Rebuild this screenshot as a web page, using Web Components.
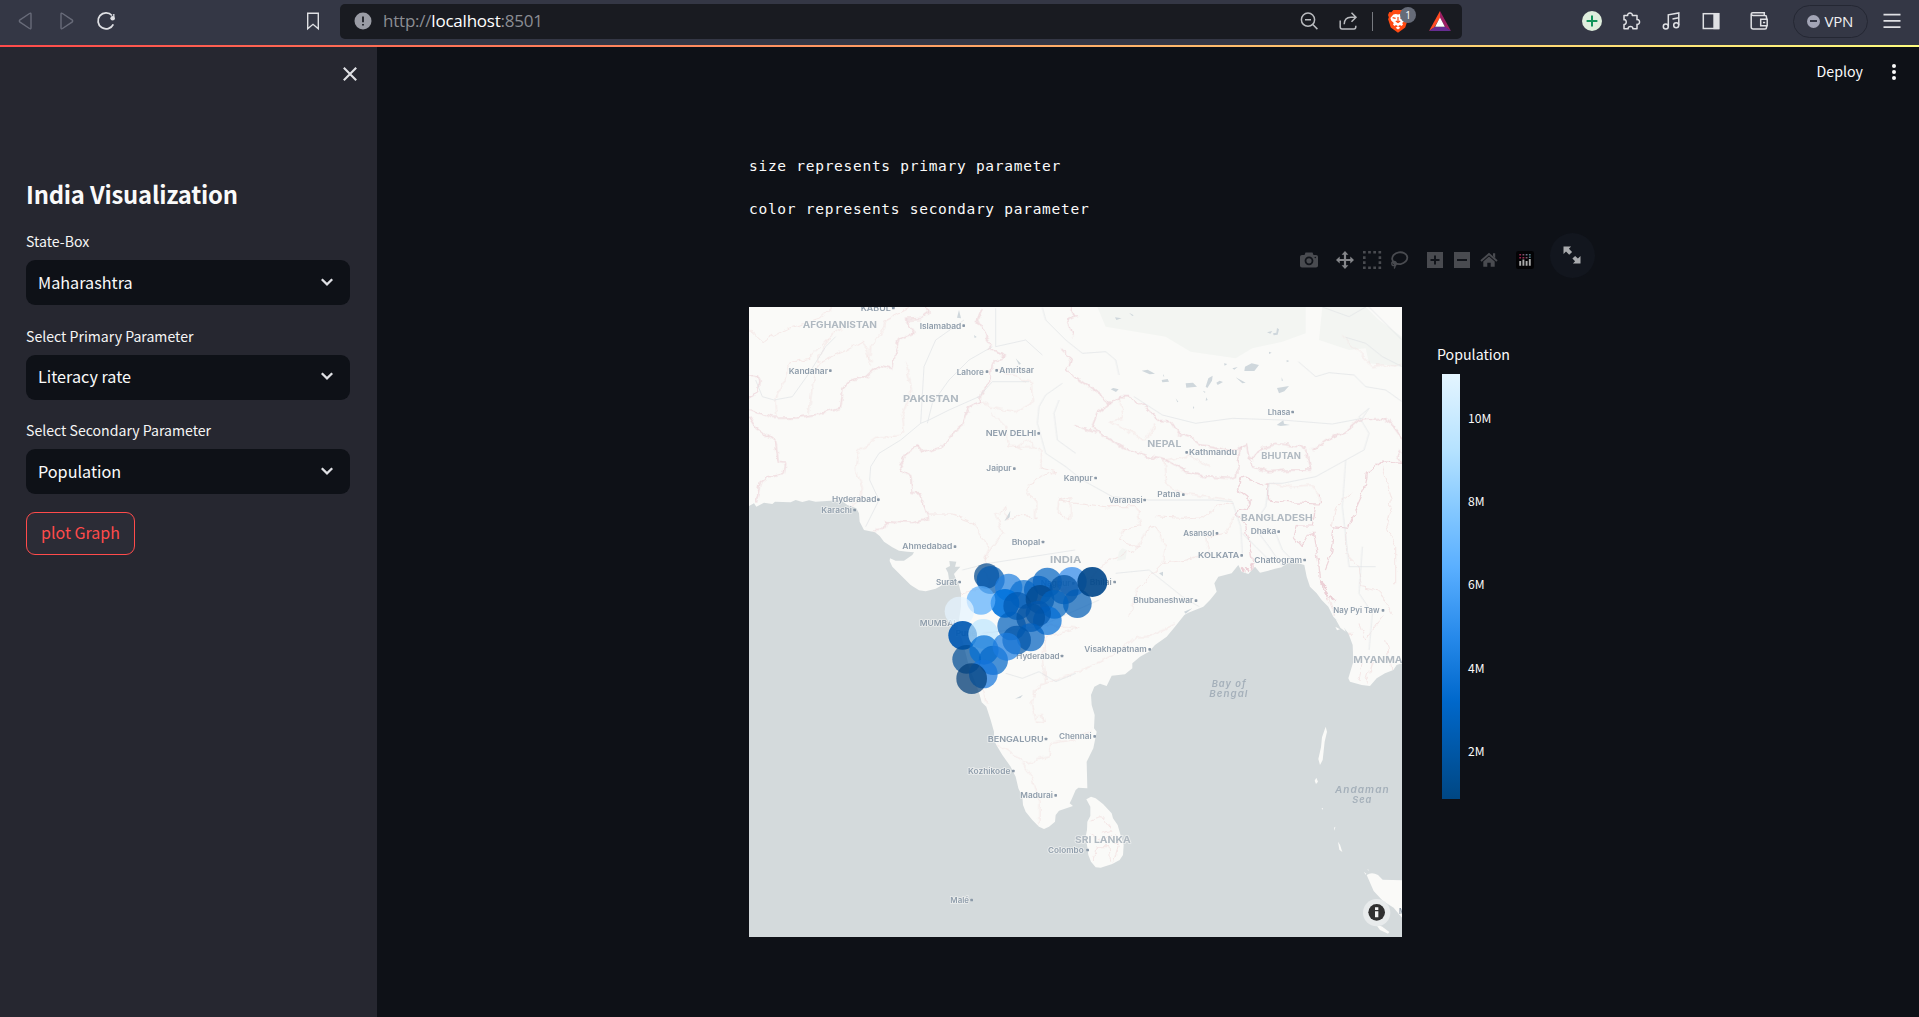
<!DOCTYPE html>
<html lang="en"><head><meta charset="utf-8"><title>India Visualization</title>
<style>
html,body{margin:0;height:100%;overflow:hidden;background:#0e1117}
body{font-family:"Noto Sans CJK SC","Noto Sans",sans-serif;color:#fafafa}
</style></head><body>
<app-shell></app-shell>
<script>
const define=(name,css,html)=>customElements.define(name,class extends HTMLElement{
  constructor(){super();this.attachShadow({mode:'open'}).innerHTML=`<style>*{box-sizing:border-box}${css}</style>`+(typeof html==='function'?html(this):html);}
});

const ICONS={
 back:[24,'<path d="M17 5.2v13.6q0 1.6-1.5.7L6 13.2q-1.3-1.2 0-2.4l9.5-6.3q1.5-.9 1.5.7z" stroke="#686b79" stroke-width="1.4"/>'],
 forward:[24,'<path d="M7 5.2v13.6q0 1.6 1.5.7l9.5-6.3q1.3-1.2 0-2.4L8.500 4.500q-1.5-.9-1.500.7z" stroke="#686b79" stroke-width="1.4"/>'],
 reload:[24,'<path d="M18 6.500A8 8 0 1 0 19.300 15.300" stroke-width="1.8"/><circle cx="18.600" cy="9.300" r="2.200" fill="currentColor" stroke="none"/><path d="M19.800 5v5.500" stroke-width="1.300"/>'],
 bookmark:[24,'<path d="M6.700 4.300h10.600v15.500L12 15.300l-5.300 4.500z" stroke-width="1.4"/>'],
 warn:[24,'<circle cx="12" cy="12" r="8.500" fill="#9a9ca5" stroke="none"/><path d="M12 7.500v5.800M12 14.900v1.700" stroke="#24262d" stroke-width="1.900"/>'],
 zoom:[24,'<circle cx="11" cy="10.700" r="6.600"/><path d="M8 10.700h6M15.800 15.500l4.600 4.600" />'],
 share:[24,'<path d="M4.200 11.500v6.600q0 1.800 1.800 1.800h12q1.800 0 1.800-1.800v-1.400M8.200 15.300q.3-7 6.600-7h4.500M15.500 3.800l4.500 4.500-4.500 4.500"/>'],
 brave:[24,'<path d="M7.300 1h9.400l2 2.200 2-.2 1.300 3-.8 2.200.7 2-2.700 8.200L12 23.700 4.800 18.400 2.100 10.200l.7-2L2 6l1.300-3 2 .2z" fill="#ff4a12" stroke="none"/><path d="M12 5.500l2.200-.5 2.400.4 3 3.500-.8 2.500-2.600 2.700.8 1.400-1.500 1.500-1.500-1-2 1.200 2.300 1.600L12 20.600l-2.300-1.800 2.300-1.600-2-1.200-1.500 1L7 15.500l.8-1.400-2.600-2.700-.8-2.500 3-3.500 2.400-.4z" fill="#fff" stroke="none"/><path d="M6.600 8.600l3 .8M17.400 8.600l-3 .8M12 8v5.500M9.800 12l2.200 1.500 2.200-1.500" stroke="#ff4a12" stroke-width="1.200"/>'],
 bat:[24,'<path d="M12 2v7L6.200 18.500 1 22z" fill="#ff4b24" stroke="none"/><path d="M12 2l11 20-5.400-3.500L12 9z" fill="#9e1f63" stroke="none"/><path d="M1 22l5.400-4h11.200L23 22z" fill="#662d91" stroke="none"/><path d="M12 8.600l4.900 9.100H7.100z" fill="#fff" stroke="none"/>'],
 add:[24,'<circle cx="12" cy="12" r="10" fill="#dfeedd" stroke="none"/><path d="M12 6.600v10.800M6.600 12h10.800" stroke="#10935a" stroke-width="2"/>'],
 puzzle:[24,'<path d="M5 6.500h3.700C7.800 3.300 14.200 3.300 13.300 6.500H18v4.200c3.400-.9 3.400 5.500 0 4.600v4.500h-4.200c.7-3.200-5.300-3.200-4.600 0H5v-4.400c3 .5 3-5.500 0-4.700z" stroke-linejoin="round"/>'],
 music:[24,'<path d="M9.300 17.500V5.800L19.800 4v12.200M13.500 10l6.300-1.200"/><circle cx="6.800" cy="17.600" r="2.500"/><circle cx="17.200" cy="16.300" r="2.500"/>'],
 panel:[24,'<rect x="4.300" y="4.700" width="15.400" height="14.800"/><rect x="14.300" y="4" width="6" height="16.200" fill="currentColor" stroke="none"/>'],
 wallet:[24,'<path d="M19.500 10V8q0-1.500-1.500-1.500H6.200A2 2 0 0 1 4.200 5q0-1.200 1.500-1.200h11.600v2.700M4.200 5v13q0 2 2 2H18q1.500 0 1.500-1.500V17M20.200 10.300h-6.500v6.400h6.500zM16 13.500h2.200"/>'],
 menu:[24,'<path d="M3.500 5.700h17M3.500 11.900h17M3.500 18.100h17" stroke-width="1.700"/>'],
 close:[24,'<path d="M5.800 5.800l12.400 12.400M18.200 5.800L5.800 18.200" stroke-width="2.100"/>'],
 kebab:[24,'<g fill="#fafafa" stroke="none"><circle cx="12" cy="6" r="2"/><circle cx="12" cy="12" r="2"/><circle cx="12" cy="18" r="2"/></g>'],
 chevron:[24,'<path d="M6.800 9.200l5.200 5.100 5.200-5.100" stroke-width="2.300"/>'],
 camera:[20,'<path d="M1 6.800Q1 5 3 5h2.500l1-2.400h7L14.500 5H17q2 0 2 1.800v9q0 1.800-2 1.800H3q-2 0-2-1.800z" fill="#494b50" stroke="none"/><circle cx="10" cy="10.800" r="3.500" stroke="#11141a" stroke-width="1.800"/><circle cx="16.300" cy="7.500" r=".8" fill="#11141a" stroke="none"/>'],
 pan:[20,'<path d="M10 1l3.400 3.700h-2.300v4.200h4.200V6.600L19 10l-3.700 3.400v-2.300h-4.200v4.200h2.300L10 19l-3.400-3.700h2.300v-4.200H4.700v2.300L1 10l3.700-3.400v2.300h4.200V4.700H6.600z" fill="#84868a" stroke="none"/>'],
 box:[20,'<path d="M1 2.300h18.200M1 17.700h18.200" stroke="#494b50" stroke-width="2.600" stroke-dasharray="2.700 2.450"/><path d="M2.300 6.200v9M17.900 6.200v9" stroke="#494b50" stroke-width="2.600" stroke-dasharray="2.700 2.450"/>'],
 lasso:[20,'<ellipse cx="10.700" cy="8.300" rx="7.600" ry="5.900" transform="rotate(-9 10 8)" stroke="#494b50" stroke-width="1.800"/><circle cx="5" cy="13.500" r="2.200" stroke="#494b50" stroke-width="1.300"/><path d="M3 11.800l3.500 3.300M5.800 15.500q.8 1.800-.8 3" stroke="#494b50" stroke-width="1.500"/>'],
 plus:[20,'<path d="M2 2h16v16H2z" fill="#494b50" stroke="none"/><path d="M10 5.500v9M5.500 10h9" stroke="#11141a" stroke-width="2"/>'],
 minus:[20,'<path d="M2 2h16v16H2z" fill="#494b50" stroke="none"/><path d="M5 10h10" stroke="#11141a" stroke-width="2"/>'],
 home:[20,'<path d="M2 11l8-7 8 7" stroke="#494b50" stroke-width="1.900"/><path d="M4.300 11.500L10 6.500l5.700 5v5.200h-4v-4H8.300v4h-4zM14 3.200h2.200v5L14 6.300z" fill="#494b50" stroke="none"/>'],
 plotly:[20,'<rect x="1" y="1" width="18" height="18" rx="2.300" fill="#030305" stroke="none"/><path d="M5.200 11v4.800M8.400 9.500v6.300M11.600 11v4.800M14.800 9v6.800" stroke="#aaa" stroke-width="1.900"/><g stroke="none"><path d="M4.300 4h1.800v1.500H4.300zM4.300 7h1.800v1.500H4.300zM7.500 7h1.800v1.400H7.500z" fill="#9b2850"/><path d="M7.500 4h1.800v1.500H7.500zM10.700 7h1.800v1.500h-1.800z" fill="#80556b"/><path d="M10.700 4h1.800v1.500h-1.800z" fill="#68748c"/><path d="M13.900 4h1.800v1.500h-1.800zM13.900 6.600h1.800V8h-1.800z" fill="#507b83"/></g>'],
 expand:[20,'<path d="M1.500 1.500h7.600L6.900 3.700l3.200 3.200-2.900 2.900L4 6.600 1.500 9zM18.500 18.500h-7.600l2.200-2.200-2.700-2.700 2.700-2.700 2.800 2.700 2.600-2.600z" fill="#a9abae" stroke="none"/>']
};
define('ui-icon',':host{display:block;flex:none;height:var(--s,24px);width:var(--s,24px);color:#dfe0e4}svg{display:block;width:100%;height:100%}',
 h=>{const [n,p]=ICONS[h.getAttribute('name')];return `<svg viewBox="0 0 ${n} ${n}" fill="none" stroke="currentColor" stroke-width="1.500">${p}</svg>`});

define('browser-bar',`
:host{display:flex;align-items:center;height:45px;background:#343745;padding-bottom:3px;flex:none}
.url{display:flex;align-items:center;width:1122px;height:35px;border-radius:5px;background:#191b21;margin-left:15px;padding-left:10.500px}
.addr{margin-left:8.500px;width:906px;flex:none;font:17px/24px "Open Sans",sans-serif;letter-spacing:-.22px;color:#8b8d93;white-space:nowrap}
.addr b{color:#fff;font-weight:400}
.url ui-icon{color:#b9bbbf}
.sep{width:1.500px;height:19px;flex:none;background:#777a80;margin:0 15px 0 12px}
.shield{position:relative;width:20px;height:24px;--s:24px;flex:none}
.shield ui-icon{margin-left:-2px}
.badge{position:absolute;left:12px;top:-2px;width:16px;height:16px;border-radius:8px;background:#666b78;color:#fff;font:10px/16px "Open Sans",sans-serif;text-align:center}
.vpn{display:flex;align-items:center;width:75px;height:33px;border:1.500px solid #242733;border-radius:17px;margin-left:22.500px;padding-left:12.500px;font:15px/30px "Open Sans",sans-serif;color:#f0f0f2;letter-spacing:-.2px}
.dot{width:13px;height:13px;border-radius:50%;background:#a3a5b6;margin-right:5px;display:flex;align-items:center;justify-content:center}
.dot:before{content:"";width:7px;height:2px;background:#343745}`,`
<ui-icon name="back" style="margin-left:14px"></ui-icon><ui-icon name="forward" style="margin-left:16px"></ui-icon><ui-icon name="reload" style="margin-left:16px"></ui-icon><ui-icon name="bookmark" style="margin-left:183px"></ui-icon>
<div class="url"><ui-icon name="warn"></ui-icon><div class="addr">http://<b>localhost</b>:8501</div><ui-icon name="zoom" style="margin-left:7.500px"></ui-icon><ui-icon name="share" style="margin-left:15px"></ui-icon><i class="sep"></i><div class="shield"><ui-icon name="brave"></ui-icon><span class="badge">1</span></div><ui-icon name="bat" style="margin-left:20px"></ui-icon></div>
<ui-icon name="add" style="margin-left:117.500px"></ui-icon><ui-icon name="puzzle" style="margin-left:15px"></ui-icon><ui-icon name="music" style="margin-left:16px"></ui-icon><ui-icon name="panel" style="margin-left:16px"></ui-icon><ui-icon name="wallet" style="margin-left:24px"></ui-icon>
<div class="vpn"><i class="dot"></i>VPN</div><ui-icon name="menu" style="margin-left:11.500px"></ui-icon>`);

define('select-box',`
:host{display:flex;flex-direction:column;height:94.500px}
.label{font-size:14.100px;line-height:22px;height:30px;color:#f5f5f5}
.field{height:45px;border-radius:9px;background:#0e1117;display:flex;align-items:center;justify-content:space-between;padding:0 11.500px 2px 12px;font-size:16.200px}`,
`<div class="label"><slot name="label"></slot></div><div class="field"><span><slot></slot></span><ui-icon name="chevron"></ui-icon></div>`);

define('side-bar',`
:host{display:block;width:377px;flex:none;background:#262730;padding:15px 27px 0 26px}
.top{display:flex;justify-content:flex-end;height:24px;margin-right:-12px}
h1{font-size:23.800px;font-weight:600;line-height:36px;margin:90px 0 18px;letter-spacing:-.2px}
button{display:block;width:109px;height:43px;margin-top:-2px;border:1px solid #ff4b4b;border-radius:9px;background:#2b2c36;color:#ff4b4b;font:16px/24px "Noto Sans CJK SC",sans-serif;padding:0 0 2px}`,`
<div class="top"><ui-icon name="close"></ui-icon></div><h1>India Visualization</h1>
<select-box><span slot="label">State-Box</span>Maharashtra</select-box>
<select-box><span slot="label">Select Primary Parameter</span>Literacy rate</select-box>
<select-box><span slot="label">Select Secondary Parameter</span>Population</select-box>
<button>plot Graph</button>`);

define('chart-toolbar',`
:host{display:flex;align-items:center;height:46px;--s:20px;padding-left:549.500px}
ui-icon+ui-icon{margin-left:7px}ui-icon.g{margin-left:16px!important}
.full{width:45px;height:45px;border-radius:50%;background:#12161e;margin:-9px 0 0 15px;display:flex;align-items:center;justify-content:center;--s:20px;padding:0 1px 1px 0}`,
`<ui-icon name="camera"></ui-icon><ui-icon class="g" name="pan"></ui-icon><ui-icon name="box"></ui-icon><ui-icon name="lasso"></ui-icon><ui-icon class="g" name="plus"></ui-icon><ui-icon name="minus"></ui-icon><ui-icon name="home"></ui-icon><ui-icon class="g" name="plotly"></ui-icon><div class="full"><ui-icon name="expand"></ui-icon></div>`);

/* Map space: three units per screen pixel. label: text, left, centre y, width, size, class */
const LABELS=[
['KABUL',335,24,90,22,'c'],['AFGHANISTAN',161,74,223,24,'n'],['Islamabad',512,78,125,21],['Kandahar',119,213,118,21],['Lahore',623,216,82,21],['Amritsar',751,211,104,21],['PAKISTAN',462,295,167,26,'n'],['NEW DELHI',710,400,152,23,'c'],['Jaipur',712,506,76,21],['Kanpur',944,534,87,21],['Hyderabad',249,599,133,21],['Karachi',217,630,92,21],['Ahmedabad',460,740,150,21],['Bhopal',788,726,86,21],['Surat',561,847,63,21],['INDIA',903,778,94,27,'n'],['Lhasa',1556,336,68,21],['NEPAL',1195,431,102,26,'n'],['Kathmandu',1320,457,144,21],['BHUTAN',1537,467,119,25,'n'],['Varanasi',1079,601,102,21],['Patna',1225,584,69,21],['BANGLADESH',1476,654,215,26,'n'],['Asansol',1303,700,93,21],['Dhaka',1505,695,77,21],['KOLKATA',1347,766,124,23,'c'],['Chattogram',1516,780,143,21],['Bhubaneshwar',1153,902,180,21],['Nay Pyi Taw',1753,931,139,21],['Nagpur',875,850,90,21],['Bhilai',1022,846,66,21],['MUMBAI',512,970,108,23,'c'],['Pune',620,999,62,21],['Hyderabad',802,1069,130,21],['Visakhapatnam',1006,1048,187,21],['BENGALURU',716,1317,168,23,'c'],['Chennai',930,1310,98,21],['Kozhikode',657,1413,127,21],['Madurai',814,1486,98,21],['SRI LANKA',978,1617,167,27,'n'],['Colombo',897,1651,107,21],['Malé',604,1802,56,21],['MYANMAR',1813,1078,168,27,'n'],['Medan',1950,1834,70,21],
['Bay of',1388,1151,105,27,'s'],['Bengal',1381,1181,117,27,'s'],['Andaman',1758,1467,164,27,'s'],['Sea',1810,1497,60,27,'s']];
const DOTS=[[433,24],[644,77],[244,212],[714,215],[743,211],[869,400],[796,506],[1040,534],[388,599],[317,630],[618,740],[882,726],[632,846],[1631,336],[1313,457],[1187,600],[1303,584],[1404,700],[1589,695],[1478,766],[1667,780],[1341,902],[1902,931],[973,850],[1097,846],[939,1068],[1202,1048],[891,1317],[1037,1309],[793,1413],[920,1486],[1016,1650],[668,1800]];
const BORDER=[
'M0 225L25 228 30 250 25 272 0 298M0 330L70 352 155 350 205 343 275 322 282 265 310 235 350 230 385 198 430 208 440 150 450 118 495 100 470 58 520 55 540 40 535 21',
'M0 348L25 385 80 425 88 487 110 490 105 520 60 527 35 545 22 605',
'M700 21L685 60 705 100 732 137 720 150 768 168 730 190 725 240 690 290 693 305 660 320 640 375 600 410 575 440 520 457 505 438 480 455 450 500 455 515 485 530 490 580 515 582 538 655 490 670 410 665 408 685 380 685 378 697',
'M960 21L978 50 955 60 970 110M940 150L965 175 955 210 978 232 1020 260 1060 290 1085 310 1110 290 1140 290 1195 325 1235 365 1265 365 1290 400 1320 410 1355 435 1400 440 1430 450 1460 450 1495 435 1503 470 1512 480 1540 440 1580 430 1650 440 1675 450 1685 510 1620 510 1560 515 1505 500 1500 470',
'M1085 310L1045 340 1028 382 1060 405 1130 445 1200 470 1250 480 1310 515 1370 530 1440 535 1465 530 1468 480 1475 440M978 376L1045 400',
'M1480 530L1500 540 1540 555 1560 552 1558 600 1620 608 1710 612 1718 600 1705 580M1480 530L1465 570 1510 605 1500 630 1470 625 1460 645 1490 675 1500 730 1510 780 1515 820M1700 620L1690 675 1645 675 1635 710 1660 740 1680 705 1695 700 1708 780 1715 840 1735 900M1725 810L1745 760 1755 680 1795 685 1810 650 1850 560 1855 520 1900 485 1959 490',
'M1690 450L1735 420 1790 395 1830 360 1900 355 1930 375 1959 415M1959 450L1945 470 1959 490'];
const THIN=[
'M0 90L40 125 95 95 150 75 210 55 250 20M240 110L205 180 215 185 290 150 340 120 370 190M80 345L78 300 110 230 120 190 180 175 240 110 310 60M180 340L195 220 215 185M360 200L365 140 400 90 410 60 480 25',
'M470 190L490 270 460 345 465 390 450 410 380 415 330 450 322 510 340 560 335 600 300 615M690 305L740 325 800 335 850 310 848 255 810 230 740 210M725 335L770 380 780 440 860 440 830 420 800 440 820 450',
'M538 645L610 645 680 670 690 700 722 742 705 780M705 780L760 700 740 640 770 620 775 660 830 640 860 660 860 600 835 580 840 550 920 515 880 505 870 440M930 600L965 590 965 660 925 640 930 600 1070 620 1165 620 1175 680 1120 690',
'M630 880L720 860 705 780M860 900L1030 830 1080 780 1165 750 1190 690 1220 680 1250 740 1240 790 1170 860 1150 910 1140 950M1120 690L1110 720 1170 740M1220 650L1300 655 1360 650 1400 620 1450 610M1240 790L1310 780 1380 760 1370 710 1430 700 1455 650',
'M700 1000L850 970 990 985 890 1010 880 1080 890 1150 860 1160 850 1210 860 1260 880 1240 885 1270 860 1265M890 1150L1000 1110 1090 1070 1160 1010 1200 1010 1280 975M700 1165L712 1210M742 1330L830 1390 900 1370 905 1330 970 1320 1030 1290M820 1390L850 1430 870 1500 870 1575',
'M1110 290L1125 355 1080 365 1115 385 1190 420 1220 370M1250 480L1320 465 1380 500M1245 480L1250 550 1300 580 1450 600M1550 550L1620 560 1690 555 1710 600M1780 110L1840 165 1870 200 1900 195 1930 200 1959 190',
'M1810 580L1760 620 1750 680M1790 690L1790 760 1830 800 1840 860 1890 870 1930 940M1900 500L1930 600 1910 680 1940 740 1940 850M1715 840L1760 950M1745 960L1790 1000 1815 1000M1830 970L1850 1020 1900 950M1840 1090L1830 1140M1870 1080L1850 1150M1910 1020L1925 1110'];
const ROAD=[
'M20 240L40 290 75 300 130 290 180 220 230 140 260 110M730 140L660 180 600 240 550 310 535 370M730 245L690 290 600 330 540 360 515 370 455 420M645 60L560 120 525 200 515 370M455 420L390 460 365 500 362 540 390 600 350 680M740 25L740 140 830 120 880 165M730 245L840 245',
'M940 250L890 285 870 320 865 370 890 460 950 500 1000 540 1090 590 1200 600 1390 600 1450 605 1475 680 1480 760M930 300L915 340 925 420 980 460M880 23L890 60 950 120 1000 160 1070 155 1100 180 1110 225M1155 290L1240 345 1340 370 1450 355 1600 360 1750 372 1840 355 1860 325 1830 350 1860 400 1845 450 1700 530 1600 550 1560 550 1550 620 1530 650',
'M1720 21L1800 50 1850 21M1860 21L1959 120M1790 112L1850 130 1900 170 1959 200M1648 185L1700 230 1740 218 1815 225 1850 260 1910 270 1959 305M978 750L720 790 640 810M1100 820L1200 810 1300 890 1350 920M700 1000L870 980 1050 900M770 1120L820 1135 870 1115 920 1145 980 1120M1480 700L1520 740 1560 780M1530 700L1560 740 1600 800M1580 700L1600 750 1640 790M1790 480L1780 620 1800 800 1880 800M1840 740L1830 880 1870 940 1860 1050'];
const LAKES='M1178 212l18-3 22 12-16 2zM1238 240l18-3 4 8-20 2zM1310 250l22-2 12 12-32 3zM1370 260l8-25 13-8-2 15-14 22zM1402 248l10-6 10 4-16 9zM1460 232l30 16-10 2zM1488 200l20-10 22 5-14 18-30 0zM1584 264l36-6-14 16-16 6zM1554 97l16-4-6 8zM1572 100l10-2 2-14 6 4-4 16-12 2zM1583 375l20-14 2 10 18 4-28 3zM1085 268l8-4 16 4-8 8zM1098 52l20 3-16 5zM1450 205l16-4-10 8zM1140 38l14 8-4 2zM630 30l6 25-12-2zM800 175l16 16-6 3zM766 664l18-32-2 20zM798 1196l24-12-8 10zM1230 820l12-5 0 14zM1305 935l25-10-20 16zM1425 190l10 2-8 5zM1560 155l8 3-8 4zM1613 180l8 3-8 4zM1280 295l8 10-3 2zM1372 292l4 8-6 2zM1332 318l4 6-4 2zM1242 222l4 8-4-2zM1362 272l8 4-4 2zM1598 232l4 10-4 0zM675 105l8 6-6 3z';
const PINS=[[170,78,38,'#00468b'],[182,90,42,'#0059b0'],[236,112,41,'#1f7fe0'],[281,133,43,'#0a6fd0'],[352,97,44,'#0063c2'],[325,120,43,'#0060c0'],[426,95,44,'#2b86ea'],[225,160,43,'#0072dd',.9],[262,168,42,'#0058b0'],[330,148,43,'#004588'],[402,119,44,'#00509f'],[442,161,43,'#005bb5'],[373,163,43,'#0062c0'],[487,96,45,'#00468b',.91],[153,151,43,'#5aaefc'],[88,184,44,'#e4f4ff'],[245,228,43,'#0060bd'],[352,212,43,'#006dd6'],[325,190,38,'#0058b0'],[302,203,43,'#0050a0'],[98,256,43,'#0058b2',.92],[160,252,45,'#bde6ff'],[302,262,42,'#0060bf'],[260,270,43,'#0054a8'],[110,328,43,'#004d97'],[162,300,44,'#006fd6'],[190,331,44,'#0065c8'],[230,290,42,'#1b7ce0'],[160,372,43,'#1273dc'],[125,386,46,'#003c78']];
const esc=(a,c,w,o)=>a.map(d=>`<path d="${d}" fill="none" stroke="${c}" stroke-width="${w}" opacity="${o}"/>`).join('');
define('geo-map',':host{display:block;width:653px;height:630px;flex:none}svg{display:block}text{font-family:Inter,"Open Sans",sans-serif;font-weight:600;fill:#8f9dab;stroke:#fafaf8;stroke-width:5px;stroke-opacity:.6;stroke-linejoin:round;paint-order:stroke}text.n{fill:#b0b9c1;font-weight:700}text.c{font-weight:600}text.s{fill:#a5b0ba;font-style:italic;stroke:none;font-weight:600;letter-spacing:3px}',
()=>`<svg width="653" height="630" viewBox="0 21 1959 1890"><defs>
<filter id="w" x="0" y="0" width="1959" height="1911" filterUnits="userSpaceOnUse"><feTurbulence type="fractalNoise" baseFrequency=".035" numOctaves="3" seed="4"/><feDisplacementMap in="SourceGraphic" scale="22" xChannelSelector="R" yChannelSelector="G"/></filter>
<clipPath id="l"><use href="#land"/></clipPath></defs>
<rect y="21" width="1959" height="1890" fill="#d4dadc"/>
<path id="land" fill="#fafaf8" d="M0 618L15 610 22 620 45 608 70 612 78 605 125 607 140 600 160 606 180 601 200 605 245 602 275 600 295 615 322 625 330 640 332 665 345 690 378 697 392 708 405 725 430 742 450 752 475 755 495 757 490 765 465 782 440 782 423 775 422 783 430 800 460 830 485 855 510 871 530 874 560 866 575 858 600 838 597 818 590 805 603 798 601 783 622 785 618 800 634 800 615 822 620 835 630 855 636 880 636 920 630 960 625 990 640 1020 650 1060 660 1100 680 1150 692 1185 698 1207 712 1220 725 1260 735 1295 735 1320 742 1335 760 1365 785 1400 800 1430 808 1465 820 1490 822 1515 830 1535 850 1560 870 1580 885 1587 900 1580 918 1565 920 1545 930 1532 972 1518 962 1510 968 1498 980 1470 988 1463 1015 1465 1013 1385 1033 1345 1043 1295 1035 1285 1037 1245 1028 1215 1026 1185 1036 1160 1053 1151 1073 1158 1088 1127 1128 1123 1150 1105 1150 1090 1173 1070 1200 1055 1218 1035 1253 1010 1278 980 1306 945 1318 938 1363 920 1383 900 1403 875 1396 850 1408 830 1448 820 1468 795 1478 815 1498 822 1518 800 1533 818 1558 812 1578 806 1598 802 1613 790 1633 785 1666 795 1673 830 1683 860 1703 880 1718 900 1738 920 1753 950 1778 975 1798 1000 1811 1035 1813 1085 1798 1135 1803 1145 1838 1155 1863 1158 1883 1135 1908 1120 1933 1110 1943 1095 1959 1090V21H0z"/>
<path fill="#fafaf8" d="M1012 1498L1026 1490 1040 1495 1062 1512 1088 1540 1092 1555 1106 1575 1113 1600 1124 1635 1122 1665 1112 1680 1090 1692 1055 1703 1040 1702 1026 1685 1018 1665 1014 1635 1010 1610 1014 1590 1015 1565 1024 1548 1024 1520zM1853 1725q15-10 34 0l14 14 58 2v112l-25-30-32-20-28-30zM1880 1872l20 8 21 16-4 5-24-11zM1844 1715l8 6-2 3zM1855 1708l4 1-1 4zM1730 1280l4 15-7 30-6 55-8 15-5-18 8-35 3-30zM1702 1433l5 12-6 7-4-10zM1767 1625l6 9 7 22-9-7zM1760 958l22 15 8 22-16-12zM1759 980l14 8-9 3zM1718 1524l4 0-2 6zM1755 1583l4-3-2 12z"/>
<path fill="#f3f5f2" d="M1045 21H1670V100L1600 125 1510 145 1460 175 1325 155 1250 110 1070 80zM1720 21H1850L1890 60 1959 110V200L1860 190 1850 145 1800 150 1710 120zM1110 755l10-10 14 5-4 28-26 5z"/>
<path fill="#cfd7dc" d="${LAKES}"/>
<g clip-path="url(#l)"><g filter="url(#w)">${esc(THIN,'#f2dddd',2.5,.8)}${esc(BORDER,'#ecd0d6',3.600,.9)}<path d="M1490 800l10 12M1500 790l12 22M1480 805l8 10M1715 845l20 20M1740 890l14 12M1725 870l10 14" stroke="#ecd0d6" stroke-width="7"/></g>${esc(ROAD,'#dfe3e5',2.5,.8)}</g>
<g filter="url(#w)">${esc(['M1022 1560L1060 1550 1090 1590 1060 1600M1020 1600L1060 1625 1080 1605 1110 1635M1030 1680L1040 1640 1080 1640 1085 1685M1100 1600L1110 1640 1095 1690'],'#f1dddd',2.5,.8)}</g>
<g fill="#8b99a8">${DOTS.map(([x,y])=>`<rect x="${x-4}" y="${y-4}" width="8" height="8" rx="2"/>`).join('')}</g>
${LABELS.map(([t,x,y,w,s,c=''])=>`<text class="${c}" x="${x}" y="${y+s*.36+.8}" font-size="${s+1.5}" textLength="${w}" lengthAdjust="spacingAndGlyphs">${t}</text>`).join('')}
<g transform="translate(543 750)">${PINS.map(([x,y,r,c,o=.71])=>`<circle cx="${x}" cy="${y}" r="${r}" fill="${c}" opacity="${o}"/>`).join('')}</g>
<circle cx="1883" cy="1838" r="41" fill="#e8ebec"/><circle cx="1883" cy="1837" r="25" fill="#303030"/><path d="M1878 1822h10v8h-10zM1878 1834h10v18h-10z" fill="#f3f3f3"/></svg>`);

define('color-scale',`
:host{display:flex;flex-direction:column;padding:36px 0 0 35px}
.t{font-size:14.200px;line-height:22px;height:31px}
.r{display:flex;margin-left:5px;height:425px}
.bar{width:18px;background:linear-gradient(#e4f5ff 0%,#b5e2ff 18%,#84c8ff 32%,#5aafff 45.500%,#2689ea 62%,#0068cb 77%,#004783 100%)}
.k{display:flex;flex-direction:column;margin:34px 0 0 8px;height:391px}
.k span{flex:none;height:83.200px;line-height:20px;font-size:12.100px}.k span:last-child{height:20px}`,
`<div class="t">Population</div><div class="r"><div class="bar"></div><div class="k"><span>10M</span><span>8M</span><span>6M</span><span>4M</span><span>2M</span></div></div>`);

define('main-view',`
:host{display:flex;flex-direction:column;flex:1}
header{display:flex;justify-content:flex-end;align-items:center;height:50px;padding-right:13px;font-size:14.200px;gap:19px;--s:24px}
header span{padding-bottom:2px}
.content{margin-left:372px}
p{margin:0;font:14.500px/43px "DejaVu Sans Mono",monospace;letter-spacing:.725px;white-space:pre}
.text{padding-top:48px;height:140px}
.plot{display:flex;margin-top:24px}`,`
<header><span>Deploy</span><ui-icon name="kebab"></ui-icon></header>
<div class="content"><div class="text"><p>size represents primary parameter</p><p>color represents secondary parameter</p></div>
<chart-toolbar></chart-toolbar><div class="plot"><geo-map></geo-map><color-scale></color-scale></div></div>`);

define('app-shell',`
:host{display:flex;flex-direction:column;width:1919px;height:1017px;overflow:hidden}
.line{height:2px;flex:none;background:linear-gradient(90deg,#ff4b4b,#fffd80)}
.body{display:flex;flex:1}`,`<browser-bar></browser-bar><div class="line"></div><div class="body"><side-bar></side-bar><main-view></main-view></div>`);
</script></body></html>
